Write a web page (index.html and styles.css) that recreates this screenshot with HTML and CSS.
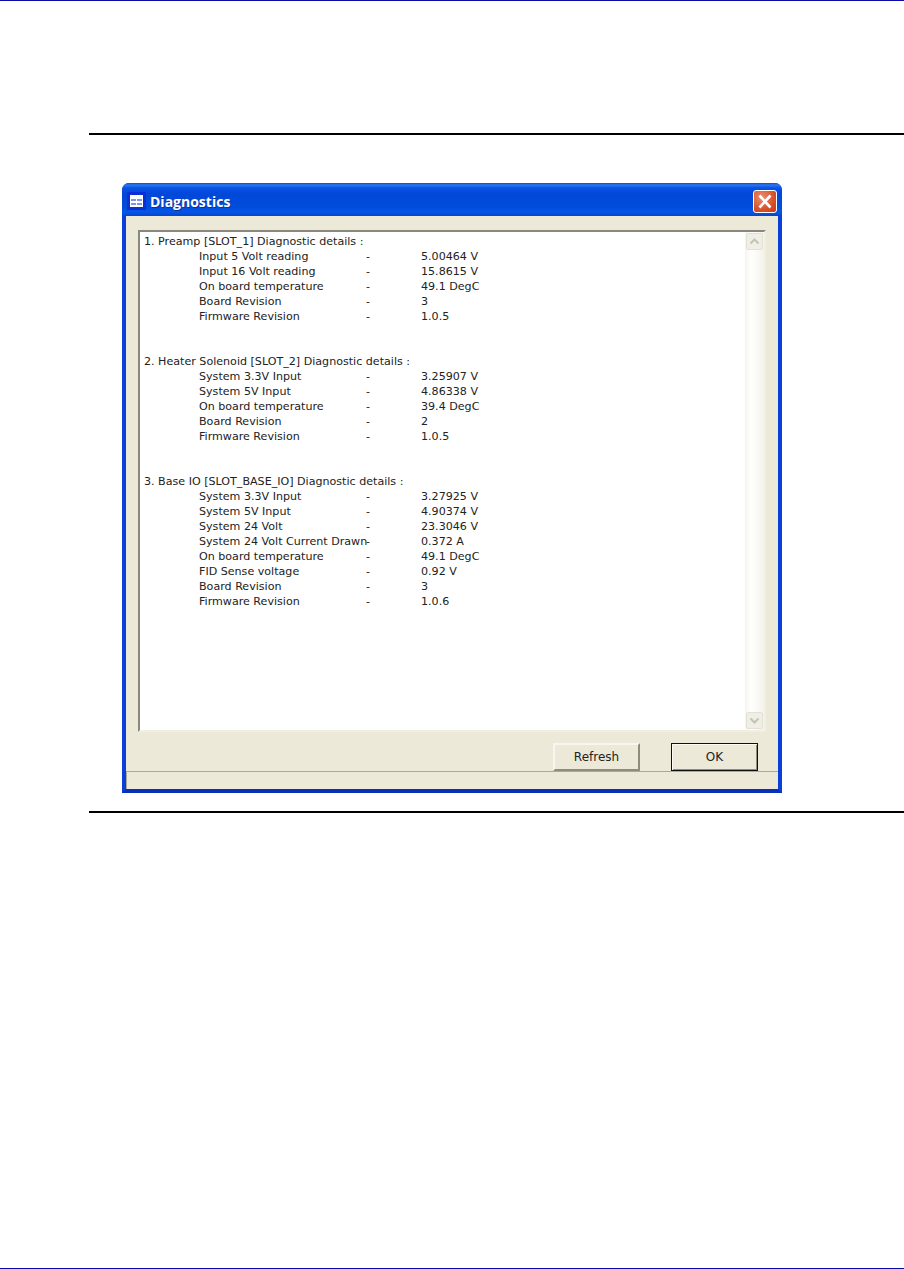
FILE: index.html
```html
<!DOCTYPE html>
<html lang="en">
<head>
<meta charset="utf-8">
<title>Diagnostics</title>
<link rel="stylesheet" href="styles.css">
</head>
<body>
<div class="page-top"></div>
<div class="rule rule-top"></div>
<section class="dialog">
  <header class="titlebar">
    <svg class="app-icon" viewBox="0 0 19 18" width="19" height="18" aria-hidden="true">
      <rect x="0" y="0" width="19" height="18" fill="#0b2fd6"/>
      <rect x="3" y="3" width="13" height="12" fill="#fff"/>
      <rect x="4" y="7" width="5" height="2" fill="#7c96f0"/>
      <rect x="10" y="7" width="5" height="2" fill="#7c96f0"/>
      <rect x="4" y="11" width="5" height="2" fill="#7c96f0"/>
      <rect x="10" y="11" width="5" height="2" fill="#7c96f0"/>
    </svg>
    <h1 class="title">Diagnostics</h1>
    <div class="close">
      <svg viewBox="0 0 24 23" width="24" height="23" aria-hidden="true">
        <path d="M6.5 5.5 L17.5 17.5 M17.5 5.5 L6.5 17.5" stroke="#fff" stroke-width="2.6" fill="none"/>
      </svg>
    </div>
  </header>
  <div class="client">
    <div class="textbox">
      <div class="content">
        <div class="group">
          <div class="head">1. Preamp [SLOT_1] Diagnostic details :</div>
          <div class="row"><span>Input 5 Volt reading</span><span>-</span><span>5.00464 V</span></div>
          <div class="row"><span>Input 16 Volt reading</span><span>-</span><span>15.8615 V</span></div>
          <div class="row"><span>On board temperature</span><span>-</span><span>49.1 DegC</span></div>
          <div class="row"><span>Board Revision</span><span>-</span><span>3</span></div>
          <div class="row"><span>Firmware Revision</span><span>-</span><span>1.0.5</span></div>
        </div>
        <div class="group">
          <div class="head">2. Heater Solenoid [SLOT_2] Diagnostic details :</div>
          <div class="row"><span>System 3.3V Input</span><span>-</span><span>3.25907 V</span></div>
          <div class="row"><span>System 5V Input</span><span>-</span><span>4.86338 V</span></div>
          <div class="row"><span>On board temperature</span><span>-</span><span>39.4 DegC</span></div>
          <div class="row"><span>Board Revision</span><span>-</span><span>2</span></div>
          <div class="row"><span>Firmware Revision</span><span>-</span><span>1.0.5</span></div>
        </div>
        <div class="group">
          <div class="head">3. Base IO [SLOT_BASE_IO] Diagnostic details :</div>
          <div class="row"><span>System 3.3V Input</span><span>-</span><span>3.27925 V</span></div>
          <div class="row"><span>System 5V Input</span><span>-</span><span>4.90374 V</span></div>
          <div class="row"><span>System 24 Volt</span><span>-</span><span>23.3046 V</span></div>
          <div class="row"><span>System 24 Volt Current Drawn</span><span>-</span><span>0.372 A</span></div>
          <div class="row"><span>On board temperature</span><span>-</span><span>49.1 DegC</span></div>
          <div class="row"><span>FID Sense voltage</span><span>-</span><span>0.92 V</span></div>
          <div class="row"><span>Board Revision</span><span>-</span><span>3</span></div>
          <div class="row"><span>Firmware Revision</span><span>-</span><span>1.0.6</span></div>
        </div>
      </div>
      <div class="scrollbar">
        <div class="arrow">
          <svg viewBox="0 0 17 17" width="17" height="17" aria-hidden="true"><path d="M4.5 10.5 L8.5 6.5 L12.5 10.5" stroke="#c4c3b6" stroke-width="2" fill="none"/></svg>
        </div>
        <div class="arrow">
          <svg viewBox="0 0 17 17" width="17" height="17" aria-hidden="true"><path d="M4.5 6.5 L8.5 10.5 L12.5 6.5" stroke="#c4c3b6" stroke-width="2" fill="none"/></svg>
        </div>
      </div>
    </div>
    <div class="actions">
      <button class="btn" type="button">Refresh</button>
      <button class="btn btn-default" type="button">OK</button>
    </div>
  </div>
  <div class="statusbar"></div>
</section>
<div class="rule rule-bottom"></div>
<div class="page-bottom"></div>
</body>
</html>
```
FILE: styles.css
```css
* { box-sizing: border-box; }
html, body { margin: 0; padding: 0; }
body {
  width: 904px;
  height: 1269px;
  background: #fff;
  display: flex;
  flex-direction: column;
  overflow: hidden;
  font-family: "DejaVu Sans", "Liberation Sans", sans-serif;
}
.page-top { height: 1px; background: #0a0aa8; }
.page-bottom { height: 1px; background: #0a0aa8; margin-top: auto; }
.rule { height: 2px; background: #000; margin-left: 89px; }
.rule-top { margin-top: 132px; }
.rule-bottom { margin-top: 18px; }

.dialog {
  width: 660px;
  height: 610px;
  margin: 48px 0 0 122px;
  display: flex;
  flex-direction: column;
  background: #ece9d8;
  border-radius: 7px 7px 0 0;
  border: 4px solid #0a3fd8;
  border-top: 0;
  border-bottom-color: #0831b8;
}
.titlebar {
  height: 33px;
  margin: 0 -4px;
  padding: 0 5px 0 5px;
  display: flex;
  align-items: center;
  border-radius: 7px 7px 0 0;
  background: linear-gradient(#0a48d4 0, #2a78ee 2px, #0852e4 5px, #0148d8 11px, #014cdc 24px, #0456e8 29px, #0a44c8 33px);
}
.app-icon { flex: none; margin-top: 2px; }
.title {
  margin: 4px 0 0 4px;
  font-family: "Open Sans", sans-serif;
  font-size: 14px;
  font-weight: 700;
  color: #fff;
  text-shadow: 1px 1px 0 #0f2f9c;
}
.close {
  margin-left: auto;
  margin-top: 4px;
  width: 24px;
  height: 23px;
  border-radius: 3px;
  border: 1px solid #fff;
  background: radial-gradient(circle at 35% 30%, #ea8f70, #d9512a 60%, #c23a1c);
}
.close svg { display: block; margin: -1px; }

.client {
  flex: none;
  height: 556px;
  padding: 14px 12px 0;
  display: flex;
  flex-direction: column;
  border-bottom: 1px solid #aca899;
}
.textbox {
  height: 502px;
  width: 628px;
  display: flex;
  background: #fff;
  border-style: solid;
  border-width: 2px;
  border-color: #8a887c #f1efe2 #f1efe2 #8a887c;
  color: #222;
  font-size: 11.1px;
  line-height: 15px;
}
.content { flex: 1; padding: 2px 0 0 4px; }
.group { margin-bottom: 30px; }
.head { height: 15px; white-space: nowrap; }
.row {
  display: grid;
  grid-template-columns: 167px 55px auto;
  padding-left: 55px;
  height: 15px;
  white-space: nowrap;
}
.scrollbar {
  width: 19px;
  padding: 1px;
  display: flex;
  flex-direction: column;
  justify-content: space-between;
  background: linear-gradient(90deg, #f5f4ee, #fff 30%, #f4f3ec);
}
.arrow {
  width: 17px;
  height: 17px;
  border: 1px solid #e3e1d5;
  border-radius: 2px;
  background: #f0efe6;
}
.arrow svg { display: block; margin: -1px; }

.actions {
  display: flex;
  justify-content: flex-end;
  gap: 31px;
  margin-top: 11px;
  padding-right: 8px;
}
.btn {
  width: 87px;
  height: 28px;
  padding: 0;
  font: inherit;
  font-size: 12px;
  color: #222;
  background: #ece9d8;
  border-style: solid;
  border-width: 2px;
  border-color: #f7f6f0 #8f8c7c #8f8c7c #f7f6f0;
}
.btn-default {
  border-width: 1px;
  border-color: #111;
  box-shadow: inset 1px 1px 0 #fbfaf5, inset -1px -1px 0 #8f8c7c;
}
.statusbar { flex: 1; box-shadow: inset 1px 0 0 #aca899; }
```
